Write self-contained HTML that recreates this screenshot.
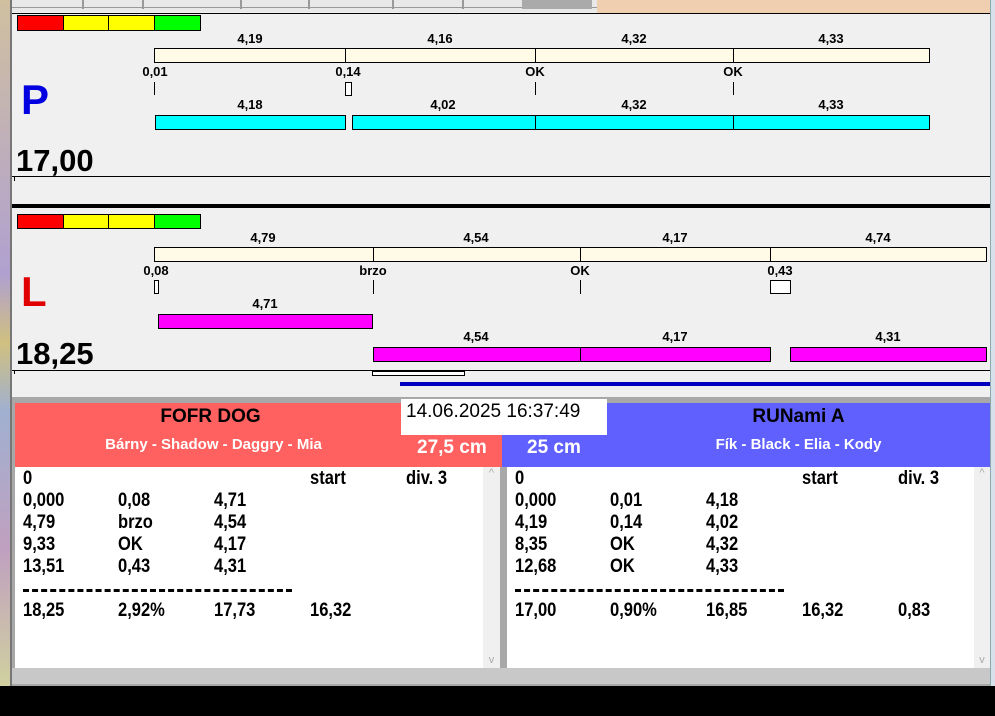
<!DOCTYPE html>
<html><head><meta charset="utf-8"><style>
*{margin:0;padding:0;box-sizing:border-box}
body{width:995px;height:716px;position:relative;background:#f0f0f0;font-family:"Liberation Sans",Arial,sans-serif;overflow:hidden}
.a{position:absolute}
.b{position:absolute;border:1px solid #000}
.t{position:absolute;font-weight:bold;font-size:13px;color:#000;transform:translateX(-50%);white-space:nowrap}
.r{position:absolute;font-weight:bold;font-size:19px;color:#000;transform:scaleX(.87);transform-origin:left}
</style></head><body>
<div class="a" style="left:0;top:0;width:597px;height:12px;background:#e8e8e8"></div>
<div class="a" style="left:597px;top:0;width:393px;height:13px;background:#f0cfb0"></div>
<div class="a" style="left:12px;top:0;width:585px;height:8px;border-bottom:1px solid #999"></div>
<div class="a" style="left:82px;top:0;width:2px;height:9px;background:#999"></div>
<div class="a" style="left:142px;top:0;width:2px;height:9px;background:#999"></div>
<div class="a" style="left:240px;top:0;width:2px;height:9px;background:#999"></div>
<div class="a" style="left:308px;top:0;width:2px;height:9px;background:#999"></div>
<div class="a" style="left:392px;top:0;width:2px;height:9px;background:#999"></div>
<div class="a" style="left:462px;top:0;width:2px;height:9px;background:#999"></div>
<div class="a" style="left:522px;top:0;width:70px;height:9px;background:#aaa"></div>
<div class="a" style="left:0;top:0;width:10px;height:686px;background:linear-gradient(#d0c0a0,#b0a0d0 40%,#d0c080 50%,#a0b0d0 60%,#c0a0c0 80%,#d0d0a0)"></div>
<div class="a" style="left:10px;top:0;width:2px;height:686px;background:#777"></div>
<div class="a" style="left:990px;top:0;width:5px;height:686px;background:#d8e0ec;border-left:1px solid #8aa"></div>
<div class="a" style="left:12px;top:13px;width:978px;height:1px;background:#000"></div>
<div class="b" style="left:17px;top:15px;width:47px;height:16px;background:#f00"></div>
<div class="b" style="left:63px;top:15px;width:46px;height:16px;background:#ff0"></div>
<div class="b" style="left:108px;top:15px;width:47px;height:16px;background:#ff0"></div>
<div class="b" style="left:154px;top:15px;width:47px;height:16px;background:#0f0"></div>
<div class="t" style="left:250px;top:31px">4,19</div><div class="t" style="left:440px;top:31px">4,16</div><div class="t" style="left:634px;top:31px">4,32</div><div class="t" style="left:831px;top:31px">4,33</div>
<div class="b" style="left:154px;top:48px;width:192px;height:15px;background:#fffbe6"></div>
<div class="b" style="left:345px;top:48px;width:191px;height:15px;background:#fffbe6"></div>
<div class="b" style="left:535px;top:48px;width:199px;height:15px;background:#fffbe6"></div>
<div class="b" style="left:733px;top:48px;width:197px;height:15px;background:#fffbe6"></div>
<div class="t" style="left:155px;top:64px">0,01</div><div class="t" style="left:348px;top:64px">0,14</div><div class="t" style="left:535px;top:64px">OK</div><div class="t" style="left:733px;top:64px">OK</div>
<div class="a" style="left:154px;top:82px;width:1px;height:13px;background:#000"></div>
<div class="b" style="left:345px;top:82px;width:7px;height:14px;background:#fff"></div>
<div class="a" style="left:535px;top:82px;width:1px;height:13px;background:#000"></div>
<div class="a" style="left:733px;top:82px;width:1px;height:13px;background:#000"></div>
<div class="a" style="left:21px;top:76px;font-size:42px;font-weight:bold;color:#0000e0">P</div>
<div class="t" style="left:250px;top:97px">4,18</div><div class="t" style="left:443px;top:97px">4,02</div><div class="t" style="left:634px;top:97px">4,32</div><div class="t" style="left:831px;top:97px">4,33</div>
<div class="b" style="left:155px;top:115px;width:191px;height:15px;background:#0ff"></div>
<div class="b" style="left:352px;top:115px;width:184px;height:15px;background:#0ff"></div>
<div class="b" style="left:535px;top:115px;width:199px;height:15px;background:#0ff"></div>
<div class="b" style="left:733px;top:115px;width:197px;height:15px;background:#0ff"></div>
<div class="a" style="left:16px;top:143px;font-size:31px;font-weight:bold">17,00</div>
<div class="a" style="left:12px;top:176px;width:978px;height:1px;background:#000"></div>
<div class="a" style="left:14px;top:177px;width:1px;height:4px;background:#000"></div>
<div class="a" style="left:12px;top:204px;width:978px;height:4px;background:#000"></div>
<div class="b" style="left:17px;top:214px;width:47px;height:15px;background:#f00"></div>
<div class="b" style="left:63px;top:214px;width:46px;height:15px;background:#ff0"></div>
<div class="b" style="left:108px;top:214px;width:47px;height:15px;background:#ff0"></div>
<div class="b" style="left:154px;top:214px;width:47px;height:15px;background:#0f0"></div>
<div class="t" style="left:263px;top:230px">4,79</div><div class="t" style="left:476px;top:230px">4,54</div><div class="t" style="left:675px;top:230px">4,17</div><div class="t" style="left:878px;top:230px">4,74</div>
<div class="b" style="left:154px;top:247px;width:220px;height:15px;background:#fffbe6"></div>
<div class="b" style="left:373px;top:247px;width:208px;height:15px;background:#fffbe6"></div>
<div class="b" style="left:580px;top:247px;width:191px;height:15px;background:#fffbe6"></div>
<div class="b" style="left:770px;top:247px;width:217px;height:15px;background:#fffbe6"></div>
<div class="t" style="left:156px;top:263px">0,08</div><div class="t" style="left:373px;top:263px">brzo</div><div class="t" style="left:580px;top:263px">OK</div><div class="t" style="left:780px;top:263px">0,43</div>
<div class="b" style="left:154px;top:280px;width:5px;height:14px;background:#fff"></div>
<div class="a" style="left:373px;top:280px;width:1px;height:14px;background:#000"></div>
<div class="a" style="left:580px;top:280px;width:1px;height:14px;background:#000"></div>
<div class="b" style="left:770px;top:280px;width:21px;height:14px;background:#fff"></div>
<div class="a" style="left:21px;top:268px;font-size:42px;font-weight:bold;color:#e00000">L</div>
<div class="t" style="left:265px;top:296px">4,71</div>
<div class="b" style="left:158px;top:314px;width:215px;height:15px;background:#f0f"></div>
<div class="t" style="left:476px;top:329px">4,54</div><div class="t" style="left:675px;top:329px">4,17</div><div class="t" style="left:888px;top:329px">4,31</div>
<div class="b" style="left:373px;top:347px;width:208px;height:15px;background:#f0f"></div>
<div class="b" style="left:580px;top:347px;width:191px;height:15px;background:#f0f"></div>
<div class="b" style="left:790px;top:347px;width:197px;height:15px;background:#f0f"></div>
<div class="a" style="left:16px;top:336px;font-size:31px;font-weight:bold">18,25</div>
<div class="a" style="left:12px;top:370px;width:978px;height:1px;background:#000"></div>
<div class="a" style="left:14px;top:371px;width:1px;height:3px;background:#000"></div>
<div class="b" style="left:372px;top:371px;width:93px;height:5px;background:#fff"></div>
<div class="a" style="left:400px;top:382px;width:590px;height:4px;background:#0000c0"></div>
<div class="a" style="left:12px;top:397px;width:978px;height:289px;background:#a8a8a8"></div>
<div class="a" style="left:15px;top:403px;width:487px;height:64px;background:#ff6060"></div>
<div class="a" style="left:502px;top:403px;width:488px;height:64px;background:#6060ff"></div>
<div class="a" style="left:401px;top:399px;width:206px;height:36px;background:#fff"></div>
<div class="a" style="left:406px;top:401px;font-size:19px">14.06.2025 16:37:49</div>
<div class="a" style="left:17px;top:406px;width:387px;text-align:center;font-size:19px;font-weight:bold">FOFR DOG</div>
<div class="a" style="left:15px;top:436px;width:397px;text-align:center;font-size:15px;font-weight:bold;color:#fff">Bárny - Shadow - Daggry - Mia</div>
<div class="a" style="left:417px;top:437px;font-size:19px;font-weight:bold;color:#fff">27,5 cm</div>
<div class="a" style="left:607px;top:406px;width:383px;text-align:center;font-size:19px;font-weight:bold">RUNami A</div>
<div class="a" style="left:527px;top:437px;font-size:19px;font-weight:bold;color:#fff">25 cm</div>
<div class="a" style="left:607px;top:436px;width:383px;text-align:center;font-size:15px;font-weight:bold;color:#fff">Fík - Black - Elia - Kody</div>
<div class="a" style="left:15px;top:467px;width:485px;height:201px;background:#fff"></div>
<div class="a" style="left:483px;top:467px;width:17px;height:201px;background:#f0f0f0;color:#aaa;font-size:11px;text-align:center">^<div style="position:absolute;bottom:2px;width:17px">v</div></div>
<div class="a" style="left:507px;top:467px;width:483px;height:201px;background:#fff"></div>
<div class="a" style="left:974px;top:467px;width:16px;height:201px;background:#f0f0f0;color:#aaa;font-size:11px;text-align:center">^<div style="position:absolute;bottom:2px;width:16px">v</div></div>
<div class="a" style="left:12px;top:668px;width:978px;height:16px;background:#c8c8c8"></div>
<div class="a" style="left:0;top:686px;width:995px;height:30px;background:#000"></div>

<div class="r" style="left:23px;top:468px">0</div><div class="r" style="left:310px;top:468px">start</div><div class="r" style="left:406px;top:468px">div. 3</div>
<div class="r" style="left:23px;top:490px">0,000</div><div class="r" style="left:118px;top:490px">0,08</div><div class="r" style="left:214px;top:490px">4,71</div>
<div class="r" style="left:23px;top:512px">4,79</div><div class="r" style="left:118px;top:512px">brzo</div><div class="r" style="left:214px;top:512px">4,54</div>
<div class="r" style="left:23px;top:534px">9,33</div><div class="r" style="left:118px;top:534px">OK</div><div class="r" style="left:214px;top:534px">4,17</div>
<div class="r" style="left:23px;top:556px">13,51</div><div class="r" style="left:118px;top:556px">0,43</div><div class="r" style="left:214px;top:556px">4,31</div>
<div class="a" style="left:23px;top:589px;width:269px;border-top:3px dashed #000"></div>
<div class="r" style="left:23px;top:600px">18,25</div><div class="r" style="left:118px;top:600px">2,92%</div><div class="r" style="left:214px;top:600px">17,73</div><div class="r" style="left:310px;top:600px">16,32</div>

<div class="r" style="left:515px;top:468px">0</div><div class="r" style="left:802px;top:468px">start</div><div class="r" style="left:898px;top:468px">div. 3</div>
<div class="r" style="left:515px;top:490px">0,000</div><div class="r" style="left:610px;top:490px">0,01</div><div class="r" style="left:706px;top:490px">4,18</div>
<div class="r" style="left:515px;top:512px">4,19</div><div class="r" style="left:610px;top:512px">0,14</div><div class="r" style="left:706px;top:512px">4,02</div>
<div class="r" style="left:515px;top:534px">8,35</div><div class="r" style="left:610px;top:534px">OK</div><div class="r" style="left:706px;top:534px">4,32</div>
<div class="r" style="left:515px;top:556px">12,68</div><div class="r" style="left:610px;top:556px">OK</div><div class="r" style="left:706px;top:556px">4,33</div>
<div class="a" style="left:515px;top:589px;width:269px;border-top:3px dashed #000"></div>
<div class="r" style="left:515px;top:600px">17,00</div><div class="r" style="left:610px;top:600px">0,90%</div><div class="r" style="left:706px;top:600px">16,85</div><div class="r" style="left:802px;top:600px">16,32</div><div class="r" style="left:898px;top:600px">0,83</div>
</body></html>
